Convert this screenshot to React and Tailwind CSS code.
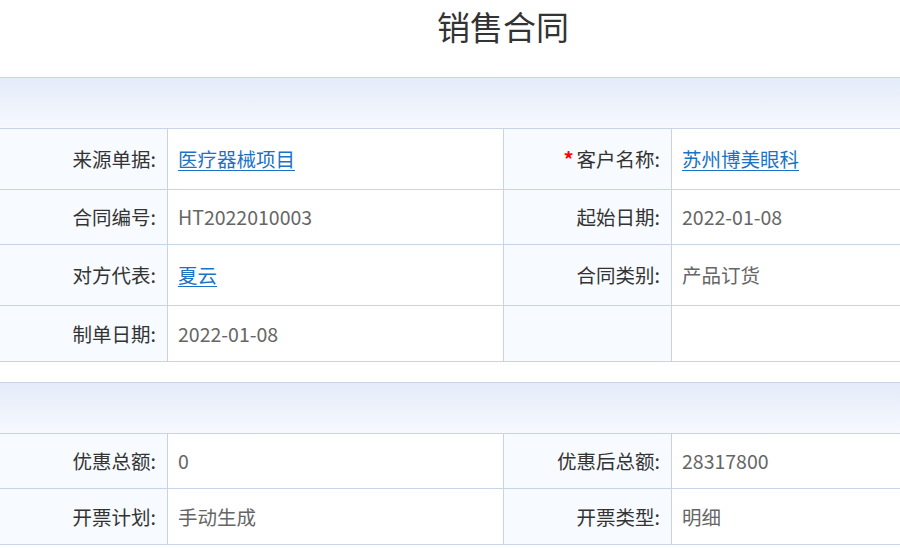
const font = { fontFamily: '"Noto Sans CJK SC", "Noto Sans", sans-serif' }

function Label({ children, required }) {
  return (
    <div className="flex items-center justify-end pr-[11px] bg-[#f7fafe] border-r border-b border-[#c8d3e3] text-[19.5px] text-[#333]">
      {required && <span className="text-[#f00] mr-[3px] text-[20px] font-bold">*</span>}
      {children}:
    </div>
  )
}

function Value({ children, link, last }) {
  return (
    <div className={`flex items-center pl-[10px] bg-white border-b border-[#c8d3e3] text-[19.5px] ${last ? '' : 'border-r'}`}>
      {link ? (
        <a href="#" className="text-[#1a73c5] underline underline-offset-[3px]">{children}</a>
      ) : (
        <span className="text-[#666]">{children}</span>
      )}
    </div>
  )
}

function Band() {
  return <div className="h-[52px] border-y border-[#c8d3e3] bg-gradient-to-b from-[#e4ebf9] to-[#f6f9fe]" />
}

function Row({ h, cells }) {
  return (
    <div className={`grid grid-cols-[168px_336px_168px_1fr] ${h}`}>
      {cells}
    </div>
  )
}

export default function App() {
  return (
    <div className="w-[900px] h-[548px] overflow-hidden bg-white" style={font}>
      <div className="h-[77px] flex items-start justify-center pl-[106px]">
        <h1 className="text-[33px] leading-none mt-[10px] text-[#333]">销售合同</h1>
      </div>

      <Band />
      <Row h="h-[61px]" cells={<>
        <Label>来源单据</Label>
        <Value link>医疗器械项目</Value>
        <Label required>客户名称</Label>
        <Value link last>苏州博美眼科</Value>
      </>} />
      <Row h="h-[55px]" cells={<>
        <Label>合同编号</Label>
        <Value>HT2022010003</Value>
        <Label>起始日期</Label>
        <Value last>2022-01-08</Value>
      </>} />
      <Row h="h-[61px]" cells={<>
        <Label>对方代表</Label>
        <Value link>夏云</Value>
        <Label>合同类别</Label>
        <Value last>产品订货</Value>
      </>} />
      <Row h="h-[56px]" cells={<>
        <Label>制单日期</Label>
        <Value>2022-01-08</Value>
        <div className="bg-[#f7fafe] border-r border-b border-[#c8d3e3]" />
        <Value last></Value>
      </>} />

      <div className="h-[20px]" />

      <Band />
      <Row h="h-[55px]" cells={<>
        <Label>优惠总额</Label>
        <Value>0</Value>
        <Label>优惠后总额</Label>
        <Value last>28317800</Value>
      </>} />
      <Row h="h-[56px]" cells={<>
        <Label>开票计划</Label>
        <Value>手动生成</Value>
        <Label>开票类型</Label>
        <Value last>明细</Value>
      </>} />
    </div>
  )
}
